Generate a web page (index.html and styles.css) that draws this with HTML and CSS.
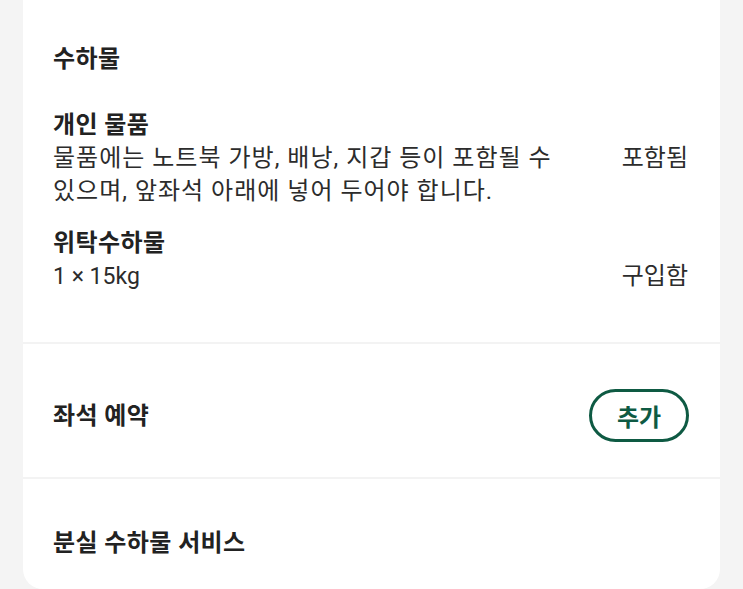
FILE: index.html
```html
<!DOCTYPE html>
<html lang="ko">
<head>
<meta charset="utf-8">
<link rel="stylesheet" href="styles.css">
</head>
<body>
<div class="page">
  <div class="card">
    <section class="section baggage">
      <h2 class="section-title">수하물</h2>
      <div class="item first">
        <h3 class="item-title">개인 물품</h3>
        <div class="item-row">
          <p class="item-desc">물품에는 노트북 가방, 배낭, 지갑 등이 포함될 수 있으며, 앞좌석 아래에 넣어 두어야 합니다.</p>
          <span class="item-value">포함됨</span>
        </div>
      </div>
      <div class="item second">
        <h3 class="item-title">위탁수하물</h3>
        <div class="item-row">
          <p class="item-desc latin">1 × 15kg</p>
          <span class="item-value">구입함</span>
        </div>
      </div>
    </section>
    <section class="section seat">
      <h2 class="section-title">좌석 예약</h2>
      <button class="add-btn" type="button">추가</button>
    </section>
    <section class="section lost">
      <h2 class="section-title">분실 수하물 서비스</h2>
    </section>
  </div>
</div>
</body>
</html>
```

FILE: styles.css
```css
* { box-sizing: border-box; }
html, body { margin: 0; padding: 0; }
body {
  background: #f4f4f4;
  font-family: Roboto, "Noto Sans CJK KR", sans-serif;
  color: #222;
  width: 743px;
  height: 589px;
  overflow: hidden;
  word-break: keep-all;
}
.page {
  padding: 0 23px;
}
.card {
  background: #fff;
  border-radius: 0 0 20px 20px;
  height: 589px;
}
.section {
  padding: 0 32px 0 30px;
}
.section + .section {
  border-top: 2px solid #f3f3f3;
}
h2, h3, p { margin: 0; }
.section-title {
  font-size: 24px;
  font-weight: 700;
  line-height: 32px;
  color: #222;
  letter-spacing: 0.4px;
}
.baggage {
  padding-top: 43px;
  height: 342px;
}
.item.first { margin-top: 34px; }
.item.second { margin-top: 19px; }
.item-title {
  font-size: 24px;
  font-weight: 700;
  line-height: 33px;
  color: #222;
  letter-spacing: 0.4px;
}
.item-row {
  display: flex;
  justify-content: space-between;
  align-items: flex-start;
}
.item-desc {
  font-size: 24px;
  line-height: 33px;
  color: #2c2c2c;
  width: 525px;
  letter-spacing: 1px;
}
.item-desc.latin {
  font-size: 23px;
  letter-spacing: 0;
}
.item-value {
  font-size: 24px;
  line-height: 33px;
  color: #2c2c2c;
}
.seat {
  display: flex;
  align-items: center;
  justify-content: space-between;
  padding-top: 46px;
  padding-bottom: 36px;
  height: 135px;
}
.add-btn {
  width: 100px;
  height: 53px;
  border: 3px solid #0e5a43;
  border-radius: 27px;
  background: #fff;
  color: #0e5a43;
  font-family: Roboto, "Noto Sans CJK KR", sans-serif;
  font-size: 24px;
  font-weight: 700;
  padding: 0;
  margin-right: -1px;
}
.lost {
  padding-top: 48px;
}
```
